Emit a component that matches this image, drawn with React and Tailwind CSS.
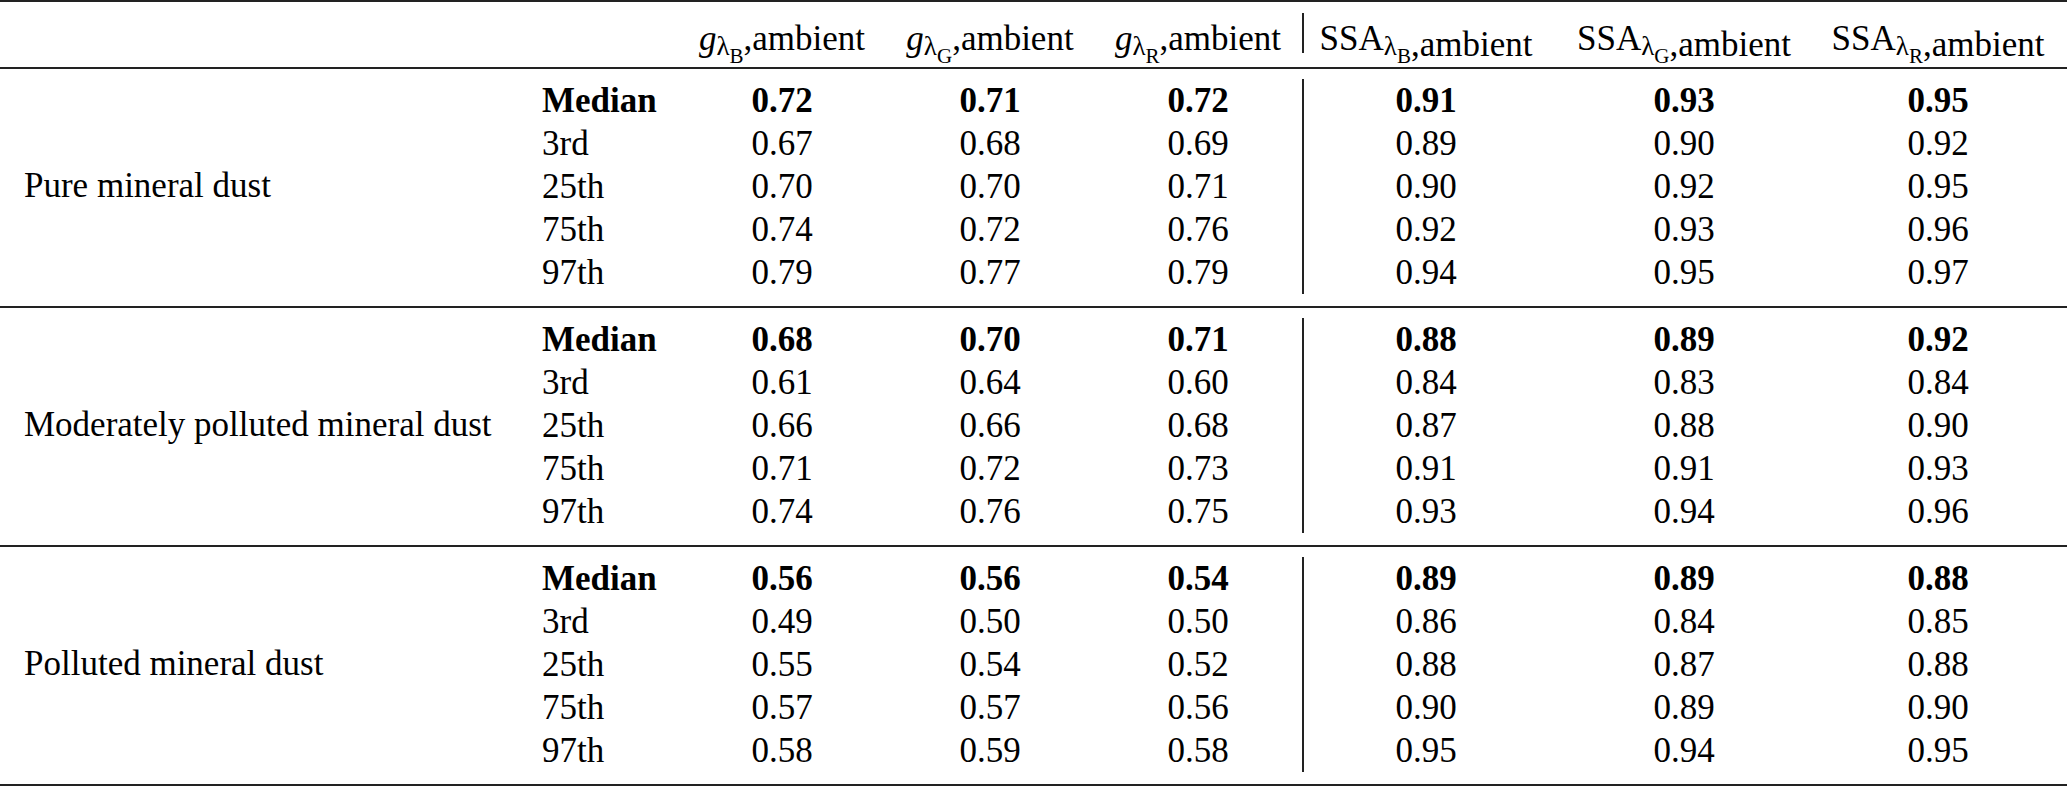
import React from 'react';

const groups = [
    {
        name: 'Pure mineral dust',
        rows: [
            ['Median', ['0.72', '0.71', '0.72'], ['0.91', '0.93', '0.95']],
            ['3rd', ['0.67', '0.68', '0.69'], ['0.89', '0.90', '0.92']],
            ['25th', ['0.70', '0.70', '0.71'], ['0.90', '0.92', '0.95']],
            ['75th', ['0.74', '0.72', '0.76'], ['0.92', '0.93', '0.96']],
            ['97th', ['0.79', '0.77', '0.79'], ['0.94', '0.95', '0.97']],
        ],
    },
    {
        name: 'Moderately polluted mineral dust',
        rows: [
            ['Median', ['0.68', '0.70', '0.71'], ['0.88', '0.89', '0.92']],
            ['3rd', ['0.61', '0.64', '0.60'], ['0.84', '0.83', '0.84']],
            ['25th', ['0.66', '0.66', '0.68'], ['0.87', '0.88', '0.90']],
            ['75th', ['0.71', '0.72', '0.73'], ['0.91', '0.91', '0.93']],
            ['97th', ['0.74', '0.76', '0.75'], ['0.93', '0.94', '0.96']],
        ],
    },
    {
        name: 'Polluted mineral dust',
        rows: [
            ['Median', ['0.56', '0.56', '0.54'], ['0.89', '0.89', '0.88']],
            ['3rd', ['0.49', '0.50', '0.50'], ['0.86', '0.84', '0.85']],
            ['25th', ['0.55', '0.54', '0.52'], ['0.88', '0.87', '0.88']],
            ['75th', ['0.57', '0.57', '0.56'], ['0.90', '0.89', '0.90']],
            ['97th', ['0.58', '0.59', '0.58'], ['0.95', '0.94', '0.95']],
        ],
    },
];

const gWidths = ['w-[208px]', 'w-[208px]', 'w-[208px]'];
const ssaWidths = ['w-[244px]', 'w-[272px]', 'w-[236px]'];

// lambda with its band letter, set as nested subscript
const Lambda = ({ band }) => (
    <span className="relative top-[5px] text-[27px] leading-none">
        λ<span className="relative top-[8px] text-[21px] leading-none">{band}</span>
    </span>
);

const GHead = ({ band }) => (
    <span>
        <span className="italic">g</span>
        <Lambda band={band} />,ambient
    </span>
);

const SsaHead = ({ band }) => (
    <span>
        SSA
        <Lambda band={band} />
        <span className="relative top-[6px]">,ambient</span>
    </span>
);

const App = () => {
    return (
        <div className="w-[2067px] h-[788px] bg-white text-black text-[35px] font-['Liberation_Serif','Times_New_Roman',serif]">
            <div className="border-t-2 border-b-2 border-[#222]">
                {/* Header */}
                <div className="flex items-start pt-[11px] pb-[14px] border-b-2 border-[#222]">
                    <div className="w-[678px]"></div>
                    {['B', 'G', 'R'].map((b, i) => (
                        <div key={b} className={`${gWidths[i]} h-[40px] pt-[7px] leading-[38px] text-center whitespace-nowrap`}>
                            <GHead band={b} />
                        </div>
                    ))}
                    <div className="flex h-[40px] border-l-2 border-[#222]">
                        {['B', 'G', 'R'].map((b, i) => (
                            <div key={b} className={`${ssaWidths[i]} pt-[7px] leading-[38px] text-center whitespace-nowrap`}>
                                <SsaHead band={b} />
                            </div>
                        ))}
                    </div>
                </div>

                {groups.map((g, gi) => (
                    <div
                        key={g.name}
                        className={`flex items-center pt-[10px] pb-[12px] ${gi < groups.length - 1 ? 'border-b-2 border-[#222]' : ''}`}
                    >
                        <div className="w-[542px] pl-[24px] whitespace-nowrap">{g.name}</div>
                        <div className="flex flex-col">
                            {g.rows.map(([label, gs, ssas], ri) => (
                                <div key={label} className={`flex leading-[43px] ${ri === 0 ? 'font-bold' : ''}`}>
                                    <div className="w-[136px]">{label}</div>
                                    {gs.map((v, i) => (
                                        <div key={i} className={`${gWidths[i]} text-center`}>{v}</div>
                                    ))}
                                    <div className="flex border-l-2 border-[#222]">
                                        {ssas.map((v, i) => (
                                            <div key={i} className={`${ssaWidths[i]} text-center`}>{v}</div>
                                        ))}
                                    </div>
                                </div>
                            ))}
                        </div>
                    </div>
                ))}
            </div>
        </div>
    );
};

export default App;
